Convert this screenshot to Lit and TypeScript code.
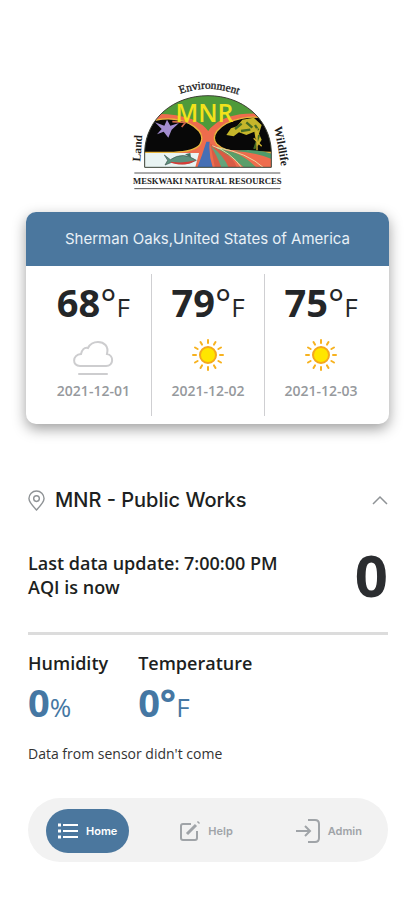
import { LitElement, html, css, svg } from "lit";
import { customElement, property } from "lit/decorators.js";

type Sky = "cloud" | "sun";
interface Day {
  temp: number;
  sky: Sky;
  date: string;
}

const DAYS: Day[] = [
  { temp: 68, sky: "cloud", date: "2021-12-01" },
  { temp: 79, sky: "sun", date: "2021-12-02" },
  { temp: 75, sky: "sun", date: "2021-12-03" },
];

const RAYS = Array.from({ length: 12 }, (_, i) => i * 30);

@customElement("mnr-logo")
class MnrLogo extends LitElement {
  static styles = css`
    :host { display: block; }
    svg { display: block; width: 170px; height: 120px; }
    text { font-family: "Liberation Serif", serif; font-weight: bold; fill: #1c1c1c; }
    .arc { font-size: 34px; font-weight: 400; stroke: #1c1c1c; stroke-width: 1; }
    .side { font-size: 35px; }
    .name { font-size: 26px; }
    .mnr { font-family: "Open Sans", sans-serif; font-weight: 600; font-size: 74px; fill: #f2e21c; }
  `;

  render() {
    return html`<svg viewBox="8 0 510 360" role="img" aria-label="Meskwaki Natural Resources">
      <defs>
        <clipPath id="dome"><path d="M73 277V228C78 130 160 62 263 62S448 130 453 228V277Z" /></clipPath>
        <path id="top" d="M172 60Q262 22 362 62" />
      </defs>
      <g clip-path="url(#dome)">
        <rect x="70" y="60" width="386" height="220" fill="#ee6c4d" />
        <path d="M60 130L130 50H400L460 130C380 104 310 130 264 172C220 130 150 104 60 130Z" fill="#4e9a3a" />
        <path d="M100 122C170 120 235 134 264 176C292 134 350 114 430 122" fill="none" stroke="#ee6c4d" stroke-width="10" />
        <path d="M66 232V150C130 120 200 128 236 168Q252 188 238 210Q220 230 160 232Z" fill="#080808" stroke="#e8b53c" stroke-width="4" />
        <path d="M460 232V140C400 112 320 132 290 168Q274 190 290 208Q312 230 360 230Z" fill="#080808" stroke="#e8b53c" stroke-width="4" />
        <path d="M70 234H236L224 280H70Z" fill="#e9f4f3" />
        <path d="M258 200Q246 240 230 280H278Q264 240 268 200Z" fill="#456fb5" />
        <path d="M270 206Q340 240 350 280H284Z" fill="#d85c45" />
        <path d="M282 216Q360 226 410 280H374Q330 240 282 216Z" fill="#5a9e69" />
        <path d="M310 226Q400 220 454 256V280H432Q380 236 310 226Z" fill="#ee6c4d" />
        <path d="M340 228Q410 220 454 236V252Q400 230 340 228Z" fill="#4e9a6a" />
        <path d="M270 212Q310 240 326 280H304Q290 240 270 212Z" fill="#63a47b" />
        <path d="M290 218Q380 232 432 280M276 212Q330 230 366 280" fill="none" stroke="#e9d8a0" stroke-width="3" />
        <path d="M318 180L332 160L350 154L366 134L400 128L424 150L416 176L424 194L412 214L406 194L402 170L378 180L356 172L340 184Z" fill="#c5b62b" />
        <path d="M344 162L364 146M378 142L396 158M404 150L414 166M362 168L390 164M416 180L402 222" fill="none" stroke="#466b24" stroke-width="7" />
        <path d="M410 160V226M400 190L424 214" fill="none" stroke="#d6b832" stroke-width="4" />
        <path d="M104 142L132 152L140 134L150 152L176 144L154 164L144 188L130 170L110 178L124 162Z" fill="#a38ed0" />
        <path d="M156 140L196 142L184 156" fill="none" stroke="#cf694a" stroke-width="5" />
      </g>
      <path d="M132 240L150 254Q188 228 228 256Q196 274 154 262L134 270L142 256Z" fill="#5c917c" stroke="#40534f" stroke-width="2" />
      <path d="M150 260Q190 266 226 256Q200 276 154 264Z" fill="#d83b35" />
      <path d="M194 238L210 234L212 248Z" fill="#3f6e5e" />
      <path d="M73 277V228C78 130 160 62 263 62S448 130 453 228V277Z" fill="none" stroke="#394337" stroke-width="3" />
      <text class="mnr" x="252" y="142" text-anchor="middle">MNR</text>
      <text class="arc"><textPath href="#top" startOffset="50%" text-anchor="middle">Environment</textPath></text>
      <text class="side" transform="translate(60 260) rotate(-86)">Land</text>
      <text class="side" transform="translate(462 156) rotate(80)">Wildlife</text>
      <path d="M42 294H480M42 341H480" stroke="#555" stroke-width="3" />
      <text class="name" x="261" y="327" text-anchor="middle">MESKWAKI NATURAL RESOURCES</text>
    </svg>`;
  }
}

@customElement("weather-card")
class WeatherCard extends LitElement {
  @property({ attribute: false }) days: Day[] = [];

  static styles = css`
    :host { display: block; }
    .card { border-radius: 10px; overflow: hidden; background: #fff; box-shadow: 0 5px 14px rgba(0, 0, 0, 0.38); }
    .place { margin: 0; background: #4b779e; color: #e8f0f6; font: 400 15px/54px Inter, sans-serif; text-align: center; }
    .days { display: grid; grid-template-columns: 11fr 10fr 11fr; padding: 8px 0; }
    .day { display: flex; flex-direction: column; align-items: center; height: 142px; }
    .day:first-child { padding-left: 10px; }
    .day:last-child { padding-right: 12px; }
    .day + .day { border-left: 1px solid #cfcfd2; }
    .temp { font: 700 38px/56px "Open Sans", sans-serif; color: #242628; white-space: nowrap; }
    .deg { font-weight: 400; }
    .unit { font-weight: 400; font-size: 26px; }
    .sky { width: 40px; height: 40px; overflow: visible; }
    .date { font: 600 14px/20px "Open Sans", sans-serif; color: #96999d; margin-top: 6px; }
  `;

  private icon(sky: Sky) {
    if (sky === "cloud") {
      return html`<svg class="sky" viewBox="0 0 40 40" fill="none" stroke="#cdcdcf" stroke-width="2" stroke-linecap="round" aria-hidden="true">
        <path d="M7 31H33C41 31 41 20 34 19C36 11 31 7 25 7C20 7 17 9 15 13C11 12 9 15 8 19C-1 20 -1 31 7 31Z" />
        <path d="M6 39H34" />
      </svg>`;
    }
    return html`<svg class="sky" viewBox="0 0 40 40" aria-hidden="true">
      <circle cx="20" cy="20" r="8" fill="#ffe600" stroke="#f5a81c" stroke-width="2" />
      ${RAYS.map((a) => svg`<path d="M20 5V8" transform="rotate(${a} 20 20)" stroke="#f7b21f" stroke-width="2" stroke-linecap="round" />`)}
    </svg>`;
  }

  render() {
    return html`<section class="card">
      <h2 class="place">Sherman Oaks,United States of America</h2>
      <div class="days">
        ${this.days.map(
          (d) => html`<div class="day">
            <div class="temp">${d.temp}<span class="deg">°</span><span class="unit">F</span></div>
            ${this.icon(d.sky)}
            <time class="date" datetime=${d.date}>${d.date}</time>
          </div>`,
        )}
      </div>
    </section>`;
  }
}

@customElement("tab-bar")
class TabBar extends LitElement {
  static styles = css`
    :host { display: block; }
    .bar { display: flex; align-items: center; justify-content: space-between; height: 64px; padding: 2px 14px 0 18px; box-sizing: border-box; border-radius: 32px; background: #f2f2f2; }
    .tab { display: flex; align-items: center; gap: 8px; height: 44px; padding: 0 12px; border: 0; border-radius: 22px; background: none; color: #a0a4a8; font: 600 11px/16px Inter, sans-serif; }
    .tab[aria-current] { background: #4b779e; color: #fff; }
    svg { width: 20px; height: 20px; fill: none; stroke: currentColor; stroke-width: 2; }
    .wide { width: 24px; height: 24px; }
  `;

  render() {
    return html`<nav class="bar">
      <button class="tab" aria-current="page">
        <svg viewBox="0 0 20 20"><path d="M5 4H20M5 10H20M5 16H20" /><path d="M0 4H3M0 10H3M0 16H3" stroke-width="3" /></svg>
        Home
      </button>
      <button class="tab">
        <svg viewBox="0 0 20 20"><path d="M11 3H3Q1 3 1 5V17Q1 19 3 19H15Q17 19 17 17V10" /><path d="M7 13L16 4M18 2L19 1" stroke-width="3" /></svg>
        Help
      </button>
      <button class="tab">
        <svg class="wide" viewBox="0 0 24 24"><path d="M12 1H19Q23 1 23 5V19Q23 23 19 23H12M0 12H14M9 7L14 12L9 17" /></svg>
        Admin
      </button>
    </nav>`;
  }
}

@customElement("app-root")
class AppRoot extends LitElement {
  static styles = css`
    :host { display: block; box-sizing: border-box; min-height: 100vh; padding: 75px 27px 38px 28px; background: #fff; color: #1d1f21; font-family: "Open Sans", sans-serif; }
    .logo { display: flex; justify-content: center; }
    .weather { margin: 17px -1px 0 -2px; }
    .station { display: flex; align-items: center; width: 100%; margin-top: 60px; padding: 0; border: 0; background: none; color: #1d1f21; font: 500 20px/32px Inter, sans-serif; text-align: left; }
    .pin { width: 17px; height: 21px; margin-right: 10px; }
    .chevron { width: 16px; height: 10px; margin-left: auto; }
    .line { fill: none; stroke: #8f9396; stroke-width: 1.5; }
    .aqi { display: flex; align-items: center; justify-content: space-between; height: 84px; margin-top: 17px; }
    .update { margin: 0; font-size: 18px; line-height: 24px; font-weight: 600; }
    .value { font-size: 58px; line-height: 84px; font-weight: 700; color: #2b2d30; }
    .rule { height: 3px; margin: 15px 0 0; border: 0; background: #dcdcdc; }
    .readings { display: flex; gap: 30px; margin: 16px 0 0; }
    .reading dt { font-size: 18px; line-height: 24px; font-weight: 600; }
    .reading dd { margin: 0; font-size: 38px; line-height: 54px; font-weight: 700; color: #4577a3; }
    .unit { font-size: 26px; font-weight: 400; }
    .note { margin: 10px 0 0; font-size: 14px; line-height: 20px; color: #333; }
    .tabs { margin-top: 34px; }
  `;

  render() {
    return html`
      <mnr-logo class="logo"></mnr-logo>
      <weather-card class="weather" .days=${DAYS}></weather-card>
      <button class="station" aria-expanded="true">
        <svg class="pin line" viewBox="0 0 18 22"><path d="M9 21C5 17 1 13 1 9A8 8 0 0 1 17 9C17 13 13 17 9 21Z" /><circle cx="9" cy="9" r="3" /></svg>
        MNR - Public Works
        <svg class="chevron line" viewBox="0 0 16 10"><path d="M1 9L8 2L15 9" /></svg>
      </button>
      <section class="aqi">
        <p class="update">Last data update: 7:00:00 PM<br />AQI is now</p>
        <span class="value">0</span>
      </section>
      <hr class="rule" />
      <dl class="readings">
        <div class="reading"><dt>Humidity</dt><dd>0<span class="unit">%</span></dd></div>
        <div class="reading"><dt>Temperature</dt><dd>0°<span class="unit">F</span></dd></div>
      </dl>
      <p class="note">Data from sensor didn't come</p>
      <tab-bar class="tabs"></tab-bar>
    `;
  }
}
